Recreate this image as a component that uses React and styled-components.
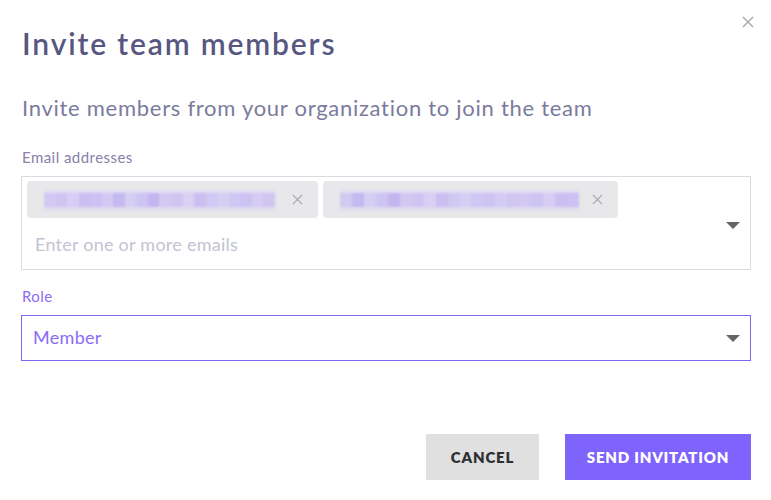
import React from "react";
import styled, { createGlobalStyle } from "styled-components";

const GlobalStyle = createGlobalStyle`
    html, body {
        margin: 0;
        padding: 0;
        background: #ffffff;
        font-family: "Lato", "Open Sans", sans-serif;
    }
`

function CloseIcon({ size = 12, color = "#aaaab2", width = 1.5 }) {
    return (
        <svg width={size} height={size} viewBox="0 0 12 12">
            <path d="M1 1L11 11M11 1L1 11" stroke={color} strokeWidth={width} />
        </svg>
    )
}

function Caret() {
    return (
        <svg width="14" height="8" viewBox="0 0 14 8">
            <path d="M0 0H14L7 7Z" fill="#666666" />
        </svg>
    )
}

const shades = [
    "#d2c9f3", "#cdc4f2", "#d6cef4", "#c9bff2", "#cbc1f2", "#d3caf3", "#c4b9f0",
    "#d6cff4", "#cdc4f2", "#c2b6ef", "#d2c9f3", "#cec5f2", "#d8d1f4", "#c9bff1",
    "#d1c8f3", "#d6cff4", "#d0c7f3", "#ccc3f2", "#d4ccf3", "#cfc6f2",
]

function App() {
    const emails = [
        { id: 1, width: 291, blur: 231, seed: 0 },
        { id: 2, width: 295, blur: 239, seed: 5 },
    ]
    return (
        <>
            <GlobalStyle />
            <Dialog>
                <Close><CloseIcon /></Close>
                <Title>Invite team members</Title>
                <Subtitle>Invite members from your organization to join the team</Subtitle>
                <Field $top={26}>
                    <Label>Email addresses</Label>
                    <EmailBox>
                        <Chips>
                            {emails.map((item) => (
                                <Chip key={item.id} $width={item.width}>
                                    <Blur $width={item.blur}>
                                        {shades.map((c, i) => (
                                            <BlurCell
                                                key={i}
                                                style={{ background: shades[(i + item.seed) % shades.length] }}
                                            />
                                        ))}
                                    </Blur>
                                    <ChipClose><CloseIcon size={11} color="#a9a9ad" width={1.4} /></ChipClose>
                                </Chip>
                            ))}
                        </Chips>
                        <Placeholder>Enter one or more emails</Placeholder>
                        <CaretSlot><Caret /></CaretSlot>
                    </EmailBox>
                </Field>
                <Field $top={17}>
                    <Label $active>Role</Label>
                    <Select>
                        <SelectValue>Member</SelectValue>
                        <Caret />
                    </Select>
                </Field>
                <Footer>
                    <Button $width={113}>CANCEL</Button>
                    <Button $width={186} $primary>SEND INVITATION</Button>
                </Footer>
            </Dialog>
        </>
    )
}

export default App

const Dialog = styled.div`
    position: relative;
    width: 771px;
    height: 500px;
    box-sizing: border-box;
    padding: 24px 20px 0 21px;
    background: #ffffff;
`

const Close = styled.div`
    position: absolute;
    top: 16px;
    right: 17px;
    width: 12px;
    height: 12px;
    display: flex;
`

const Title = styled.h1`
    margin: 0 0 0 1px;
    font-weight: 600;
    font-size: 30px;
    line-height: 38px;
    letter-spacing: 1.85px;
    color: #575782;
`

const Subtitle = styled.p`
    margin: 32px 0 0 1px;
    font-weight: 400;
    font-size: 22px;
    line-height: 28px;
    letter-spacing: 0.72px;
    color: #7b7b9d;
`

const Field = styled.div`
    margin-top: ${(p) => p.$top}px;
    display: flex;
    flex-direction: column;
`

const Label = styled.div`
    margin: 0 0 10px 1px;
    font-size: 15px;
    line-height: 18px;
    letter-spacing: 0.45px;
    color: ${(p) => (p.$active ? "#8a6cf6" : "#8a80a8")};
`

const EmailBox = styled.div`
    position: relative;
    height: 94px;
    box-sizing: border-box;
    border: 1px solid #dcdbe4;
    padding: 4px 50px 0 5px;
`

const Chips = styled.div`
    display: flex;
    gap: 5px;
`

const Chip = styled.div`
    width: ${(p) => p.$width}px;
    height: 37px;
    box-sizing: border-box;
    display: flex;
    align-items: center;
    padding: 0 15px 0 17px;
    border-radius: 4px;
    background: #e8e8eb;
`

const Blur = styled.div`
    width: ${(p) => p.$width}px;
    height: 14px;
    display: flex;
    filter: blur(1.2px);
    box-shadow: 0 -3px 0 #e1ddf1, 0 4px 0 #e0ddee;
`

const BlurCell = styled.span`
    flex: 1;
    height: 100%;
`

const ChipClose = styled.div`
    margin-left: auto;
    display: flex;
`

const Placeholder = styled.div`
    margin: 15px 0 0 8px;
    font-size: 18px;
    line-height: 22px;
    letter-spacing: 0.25px;
    color: #c3c3d2;
`

const CaretSlot = styled.div`
    position: absolute;
    right: 10px;
    top: 45px;
    display: flex;
`

const Select = styled.div`
    height: 46px;
    box-sizing: border-box;
    border: 1px solid #7d66f2;
    display: flex;
    align-items: center;
    justify-content: space-between;
    padding: 2px 10px 0 11px;
`

const SelectValue = styled.span`
    margin-top: -4px;
    font-size: 18px;
    letter-spacing: 0.3px;
    color: #8a6cf6;
`

const Footer = styled.div`
    margin-top: 73px;
    display: flex;
    justify-content: flex-end;
    gap: 26px;
`

const Button = styled.button`
    width: ${(p) => p.$width}px;
    height: 46px;
    border: none;
    padding: 0;
    font-family: "Lato", sans-serif;
    font-weight: 800;
    font-size: 15px;
    letter-spacing: 0.8px;
    color: ${(p) => (p.$primary ? "#ffffff" : "#2f2f35")};
    background: ${(p) => (p.$primary ? "#7e63fd" : "#e0e0e0")};
    cursor: pointer;
`
